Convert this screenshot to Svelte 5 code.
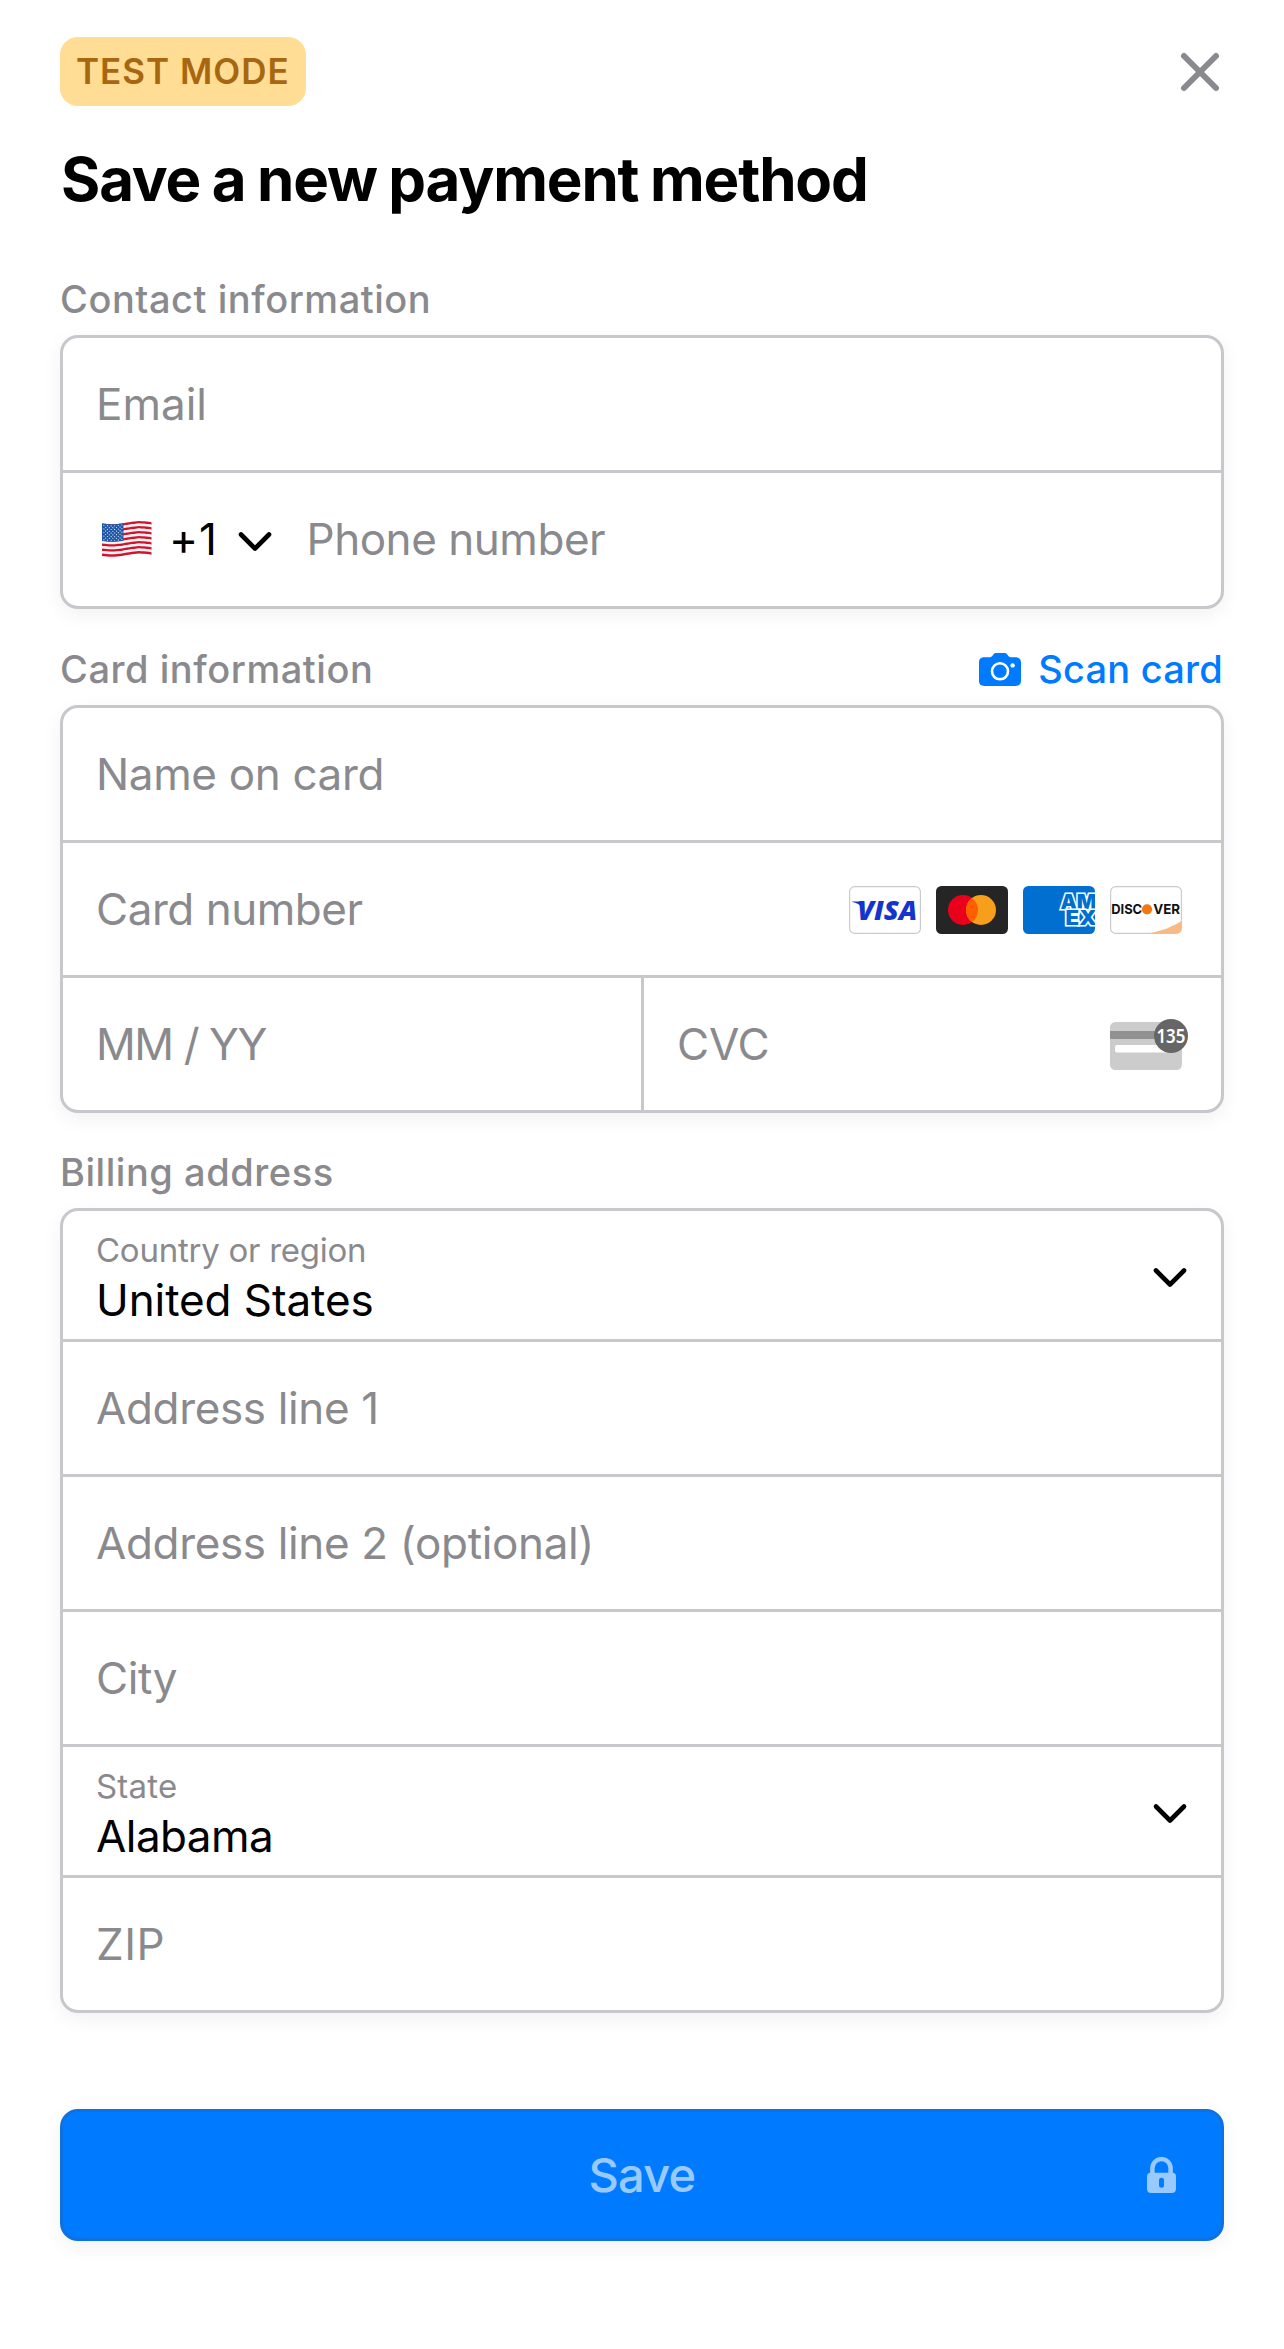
<script>
  const STRIPE = 2.5;
  const wave = (x) => 1.7 - 1.6 * Math.sin((2 * Math.PI * (x - 24)) / 56);

  // A band of cloth between two heights, following the flag's wave.
  function band(width, top, height) {
    const steps = 20;
    const xs = Array.from({ length: steps + 1 }, (_, i) => (width * i) / steps);
    const upper = xs.map((x) => `${x.toFixed(2)},${(wave(x) + top).toFixed(2)}`);
    const lower = xs.map((x) => `${x.toFixed(2)},${(wave(x) + top + height).toFixed(2)}`).reverse();
    return [...upper, ...lower].join(' ');
  }

  const stripes = Array.from({ length: 13 }, (_, i) => ({
    points: band(49.5, i * STRIPE, STRIPE),
    red: i % 2 === 0
  }));

  const stars = [];
  for (let r = 0; r < 9; r++) {
    const count = r % 2 ? 5 : 6;
    for (let c = 0; c < count; c++) {
      const x = 1.9 + c * 3.6 + (r % 2 ? 1.8 : 0);
      stars.push({ x, y: wave(x) + 1.6 + r * 1.8 });
    }
  }
</script>

{#snippet chevron()}
  <svg class="chevron" viewBox="0 0 36 24" aria-hidden="true">
    <path d="M4 4.5 L18 18.5 L32 4.5" />
  </svg>
{/snippet}

<main>
  <header>
    <span class="badge">TEST MODE</span>
    <svg class="close" viewBox="0 0 48 48" aria-label="Close">
      <path d="M8 8 L40 40 M40 8 L8 40" />
    </svg>
  </header>

  <h1>Save a new payment method</h1>

  <section>
    <div class="heading"><h2>Contact information</h2></div>
    <div class="group">
      <div class="row"><span class="hint loose">Email</span></div>
      <div class="row phone">
        <div class="country">
          <svg class="flag" viewBox="0 0 50 37" aria-label="United States">
            {#each stripes as s}
              <polygon points={s.points} class={s.red ? 'red' : 'white'} />
            {/each}
            <polygon points={band(21.5, 0, STRIPE * 7)} class="canton" />
            {#each stars as s}
              <circle cx={s.x} cy={s.y} r="0.6" class="star" />
            {/each}
          </svg>
          <span class="code">+1</span>
          {@render chevron()}
        </div>
        <span class="hint tight">Phone number</span>
      </div>
    </div>
  </section>

  <section>
    <div class="heading">
      <h2>Card information</h2>
      <div class="scan">
        <svg class="camera" viewBox="0 0 42 33" aria-hidden="true">
          <path d="M5.5 4.2 H11 C12.6 4.2 12.8 3.4 14 2 C15 .6 15.8 0 17.4 0 H25.2 C26.8 0 27.6 .6 28.6 2 C29.8 3.4 30 4.2 31.6 4.2 H36.5 C40 4.2 42 6 42 9.4 V27.8 C42 31.2 40 33 36.5 33 H5.5 C2 33 0 31.2 0 27.8 V9.4 C0 6 2 4.2 5.5 4.2 Z" />
          <circle class="ring" cx="21" cy="18.3" r="8" />
          <circle class="dot" cx="33.6" cy="12.4" r="2.2" />
        </svg>
        <span>Scan card</span>
      </div>
    </div>
    <div class="group">
      <div class="row"><span class="hint">Name on card</span></div>
      <div class="row">
        <span class="hint tight">Card number</span>
        <div class="brands">
          <svg viewBox="0 0 72 48" aria-label="Visa">
            <rect class="outline" x="0.6" y="0.6" width="70.8" height="46.8" rx="5" />
            <path class="visa-ink" d="M3.2 15.4 H11.5 L13.5 22 C11 18.8 7.5 16.8 3.2 16 Z" />
            <text class="visa visa-ink" x="8.2" y="34" textLength="60" lengthAdjust="spacingAndGlyphs">VISA</text>
          </svg>
          <svg viewBox="0 0 72 48" aria-label="Mastercard">
            <rect width="72" height="48" rx="5.5" fill="#252525" />
            <circle cx="27" cy="24" r="15" fill="#eb001b" />
            <circle cx="45" cy="24" r="15" fill="#f79e1b" />
            <path d="M36 12 A15 15 0 0 1 36 36 A15 15 0 0 1 36 12 Z" fill="#ff5f00" />
          </svg>
          <svg class="amex" viewBox="0 0 72 48" aria-label="American Express">
            <rect width="72" height="48" fill="#016fd0" />
            <text>
              <tspan x="37.5" y="23.2" textLength="36" lengthAdjust="spacingAndGlyphs">AM</tspan><tspan x="42.6" y="39.3" textLength="31" lengthAdjust="spacingAndGlyphs">EX</tspan>
            </text>
          </svg>
          <svg viewBox="0 0 72 48" aria-label="Discover">
            <rect class="outline" x="0.6" y="0.6" width="70.8" height="46.8" rx="5" />
            <path d="M39 47.4 C51 45 62 41 71.4 35.2 V42.4 A5 5 0 0 1 66.4 47.4 Z" fill="#f8b985" />
            <text class="discover" x="1.2" y="28.1" textLength="31" lengthAdjust="spacingAndGlyphs">DISC</text>
            <circle cx="37" cy="23.3" r="5.1" fill="#f27712" />
            <text class="discover" x="43.2" y="28.1" textLength="26.8" lengthAdjust="spacingAndGlyphs">VER</text>
          </svg>
        </div>
      </div>
      <div class="split">
        <div class="row"><span class="hint date">MM / YY</span></div>
        <div class="row">
          <span class="hint">CVC</span>
          <svg class="cvc" viewBox="0 0 78 51" aria-hidden="true">
            <rect y="3" width="72" height="48" rx="5.5" fill="#cccccc" />
            <rect y="12" width="72" height="8" fill="#919191" />
            <rect x="5" y="26" width="54" height="7.5" rx="2" fill="#ffffff" />
            <circle cx="61" cy="17" r="17" fill="#666666" />
            <text x="46.4" y="24" textLength="29" lengthAdjust="spacingAndGlyphs">135</text>
          </svg>
        </div>
      </div>
    </div>
  </section>

  <section>
    <div class="heading"><h2>Billing address</h2></div>
    <div class="group">
      <div class="row select">
        <div class="filled"><small>Country or region</small><strong>United States</strong></div>
        {@render chevron()}
      </div>
      <div class="row"><span class="hint">Address line 1</span></div>
      <div class="row"><span class="hint">Address line 2 (optional)</span></div>
      <div class="row"><span class="hint tight">City</span></div>
      <div class="row select">
        <div class="filled short"><small>State</small><strong>Alabama</strong></div>
        {@render chevron()}
      </div>
      <div class="row"><span class="hint zip">ZIP</span></div>
    </div>
  </section>

  <button>
    <span></span>
    <span class="action">Save</span>
    <svg class="lock" viewBox="0 0 29 36" aria-hidden="true">
      <path class="shackle" d="M5.4 18 V11.2 A9.1 9.1 0 0 1 23.6 11.2 V18" />
      <path fill-rule="evenodd" d="M3.5 15.8 H25.5 Q29 15.8 29 19.3 V31.8 Q29 36 24.8 36 H4.2 Q0 36 0 31.8 V19.3 Q0 15.8 3.5 15.8 Z M12 23.3 V28.2 A2.5 2.5 0 0 0 17 28.2 V23.3 A2.5 2.5 0 0 0 12 23.3 Z" />
    </svg>
  </button>
</main>

<style>
  :global(body) {
    background: #fff;
  }

  main {
    box-sizing: border-box;
    width: 1284px;
    height: 2349px;
    padding: 37px 60px 0;
    font-family: Inter, 'Liberation Sans', sans-serif;
    color: #000;
    background: #fff;
    white-space: nowrap;
  }

  svg {
    display: block;
    flex: none;
  }

  header {
    display: flex;
    align-items: center;
    justify-content: space-between;
    height: 69px;
  }

  .badge {
    box-sizing: border-box;
    width: 246px;
    padding-left: 16px;
    border-radius: 18px;
    background: #ffdd94;
    color: #a76610;
    font-size: 35px;
    font-weight: 600;
    line-height: 69px;
    letter-spacing: 1px;
  }

  .close {
    width: 48px;
    height: 48px;
    fill: none;
    stroke: #8a8a8e;
    stroke-width: 6;
    stroke-linecap: round;
  }

  h1 {
    margin: 37px 0 59px 1px;
    font-size: 60px;
    font-weight: 700;
    line-height: 73px;
    letter-spacing: -1.15px;
    word-spacing: -1.5px;
  }

  section {
    margin-bottom: 36px;
  }

  section + section {
    margin-bottom: 35px;
  }

  .heading {
    display: flex;
    justify-content: space-between;
    align-items: center;
    height: 48px;
    margin-bottom: 12px;
    color: #8a8a8e;
    font-size: 38px;
    font-weight: 500;
    letter-spacing: 0.54px;
  }

  h2 {
    margin: 0;
    font: inherit;
    line-height: 48px;
  }

  .scan {
    display: flex;
    align-items: center;
    gap: 17px;
    color: #007aff;
    line-height: 48px;
    letter-spacing: 0.22px;
    padding-right: 1px;
  }

  .camera {
    width: 42px;
    height: 33px;
    fill: #007aff;
  }

  .camera .ring {
    fill: none;
    stroke: #fff;
    stroke-width: 2.6;
  }

  .camera .dot {
    fill: #fff;
  }

  .group {
    border: 3px solid #c7c7cc;
    border-radius: 18px;
    background: #fff;
    box-shadow: 0 6px 20px rgba(0, 0, 0, 0.055);
  }

  .row {
    box-sizing: content-box;
    display: flex;
    align-items: center;
    justify-content: space-between;
    height: 132px;
    padding: 0 39px 0 33px;
    font-size: 44px;
    letter-spacing: -0.35px;
  }

  .row + .row,
  .row + .split {
    border-top: 3px solid #c7c7cc;
  }

  .hint {
    color: #8a8a8e;
  }

  .loose {
    letter-spacing: 0;
  }

  .tight {
    letter-spacing: -0.46px;
  }

  .date {
    letter-spacing: -1.41px;
  }

  .zip {
    letter-spacing: 0.5px;
  }

  .phone {
    height: 132px;
    padding-bottom: 1px;
    justify-content: flex-start;
  }

  .country {
    display: grid;
    grid-template-columns: 73px 68px 69.5px;
    align-items: center;
  }

  .flag {
    width: 50px;
    height: 37px;
    margin-left: 6px;
  }

  .red {
    fill: #d3132d;
  }

  .white {
    fill: #f4f4f4;
  }

  .canton {
    fill: #1f56a5;
  }

  .star {
    fill: #dfe8f5;
  }

  .code {
    letter-spacing: 1px;
  }

  .chevron {
    width: 36px;
    height: 24px;
    fill: none;
    stroke: #000;
    stroke-width: 4.6;
    stroke-linecap: round;
    stroke-linejoin: round;
    position: relative;
    top: 3px;
  }

  .split {
    display: grid;
    grid-template-columns: 578px 1fr;
  }

  .split .row + .row {
    border-top: 0;
    border-left: 3px solid #c7c7cc;
  }

  .split .row:last-child {
    padding-right: 33px;
    letter-spacing: -0.2px;
  }

  .brands {
    display: flex;
    gap: 15px;
    padding-top: 2px;
  }

  .brands svg {
    width: 72px;
    height: 48px;
  }

  .outline {
    fill: #fff;
    stroke: #cbcbcb;
    stroke-width: 1.2;
  }

  .visa {
    font: italic 800 26.5px 'Open Sans', sans-serif;
    letter-spacing: 0;
  }

  .visa-ink {
    fill: #1434cb;
  }

  .amex {
    border-radius: 5.5px;
    overflow: hidden;
  }

  .amex text {
    font: 900 19.5px / 1 Inter, sans-serif;
    letter-spacing: 0;
    fill: #016fd0;
    stroke: #fff;
    stroke-width: 3;
    paint-order: stroke;
  }

  .discover {
    font: 700 13.8px Inter, sans-serif;
    letter-spacing: 0;
    fill: #111;
  }

  .cvc {
    width: 78px;
    height: 51px;
    padding-top: 1px;
    overflow: visible;
  }

  .cvc text {
    font: 600 20px 'Noto Sans', sans-serif;
    letter-spacing: 0;
    fill: #fff;
  }

  .select {
    height: 128px;
    padding-right: 33px;
  }

  .filled {
    display: flex;
    flex-direction: column;
    padding-top: 6px;
  }

  .filled small {
    color: #8a8a8e;
    font-size: 33px;
    line-height: 44px;
    letter-spacing: -0.25px;
  }

  .filled strong {
    font-weight: 400;
    line-height: 56px;
    letter-spacing: -0.08px;
  }

  .short small {
    letter-spacing: 0.2px;
  }

  .short strong {
    letter-spacing: -0.56px;
  }

  button {
    box-sizing: border-box;
    display: grid;
    grid-template-columns: 1fr auto 1fr;
    align-items: center;
    width: 100%;
    height: 132px;
    margin-top: 96px;
    padding: 0 45px;
    border: 3px solid #0d72e0;
    border-radius: 18px;
    background: #007aff;
    color: #99caff;
    font: 500 47px Inter, sans-serif;
    letter-spacing: -0.78px;
    box-shadow: 0 6px 20px rgba(0, 0, 0, 0.055);
  }

  .action {
    padding-bottom: 2px;
  }

  .lock {
    justify-self: end;
    width: 29px;
    height: 36px;
    fill: #99caff;
  }

  .shackle {
    fill: none;
    stroke: #99caff;
    stroke-width: 4.5;
  }
</style>
